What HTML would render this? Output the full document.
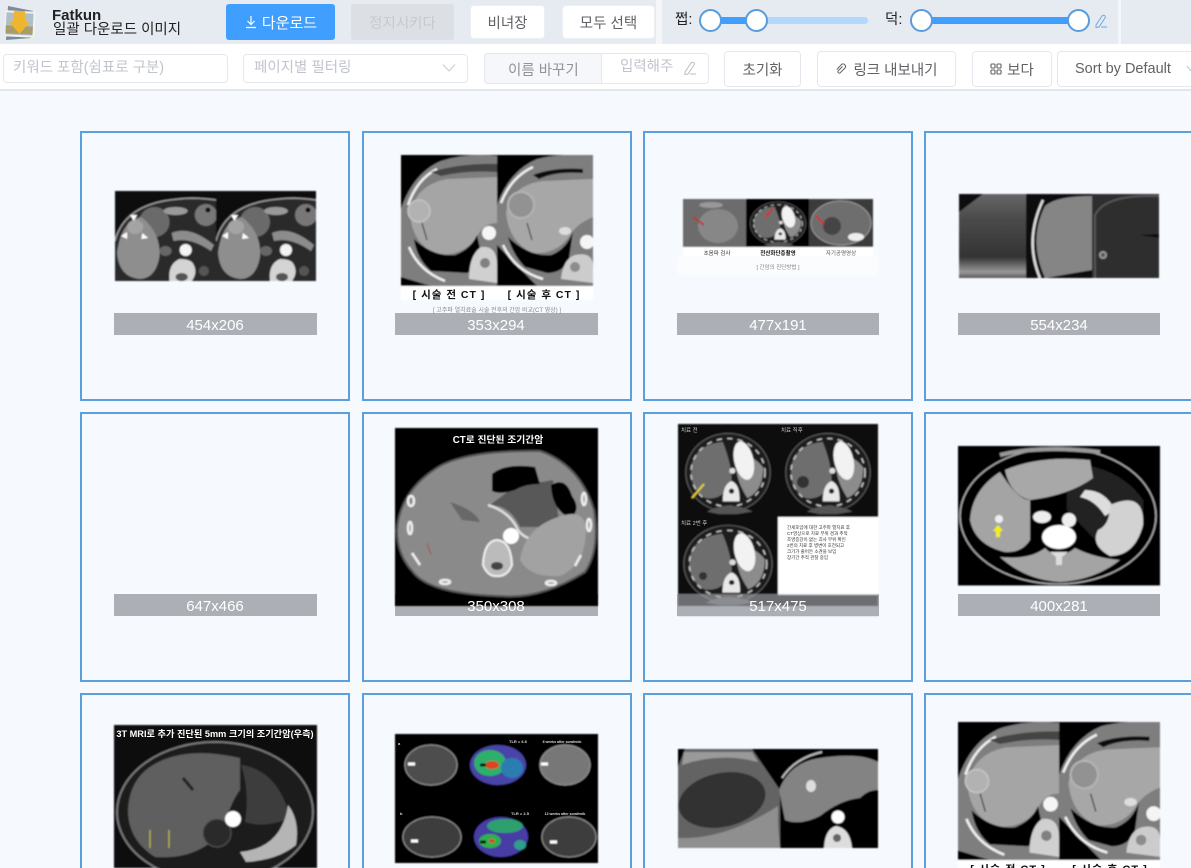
<!DOCTYPE html>
<html lang="ko"><head><meta charset="utf-8"><title>Fatkun</title>
<style>
*{box-sizing:border-box}
html,body{margin:0;padding:0;width:1191px;height:868px;overflow:hidden;background:#f6faff;font-family:"Liberation Sans","Noto Sans CJK KR",sans-serif;color:#606266}
#w{position:relative;width:1191px;height:868px;overflow:hidden;background:#f6faff}
.a{position:absolute}
.t{position:absolute;white-space:nowrap;line-height:1}
.b{position:absolute;background:#fff;border:1px solid #e4e7ed;border-radius:4px;display:flex;align-items:center;justify-content:center;font-size:14.500px;color:#606266;white-space:nowrap}
.card{position:absolute;width:270px;height:270px;border:2px solid #5b9fdc}
.r{width:267px;border-right:0}
.c{height:175px;border-bottom:0}
.l{position:absolute;height:22px;background:#acafb5}
svg{position:absolute;left:0;top:0}
</style></head><body><div id="w">
<div class="a" style="left:0;top:0;width:1191px;height:44px;background:#e6eaf1"></div>
<div class="a" style="left:656px;top:0;width:6px;height:44px;background:#f4f6f9"></div>
<div class="a" style="left:1118px;top:0;width:3px;height:44px;background:#f4f6f9"></div>
<div class="a" style="left:0;top:44px;width:1191px;height:45px;background:#fff"></div>
<div class="a" style="left:0;top:89px;width:1191px;height:2px;background:#e2e5e9"></div>

<svg width="40" height="44" viewBox="0 0 40 44" style="left:0;top:0">
<path d="M8 6 L33 11 L31 38 L6 40Z" fill="#7f8a9b"/><rect x="5" y="11" width="30" height="26" fill="#f2f2ee" transform="rotate(3 20 24)"/>
<rect x="6" y="13" width="27" height="22" fill="#aebfca" transform="rotate(3 20 24)"/><rect x="6" y="26" width="27" height="8" fill="#a89c6a" transform="rotate(3 20 24)"/>
<path d="M14 11h11v11h5L19.500 34 9 22h5z" fill="#efb52c"/></svg>
<div class="t" style="left:52px;top:8px;font-size:15px;font-weight:bold;color:#222">Fatkun</div>
<div class="t" style="left:53px;top:23px;font-size:14.500px;color:#222">일괄 다운로드 이미지</div>

<div class="a" style="left:226px;top:4px;width:109px;height:36px;background:#409eff;border-radius:3px;color:#fff;font-size:15px;display:flex;align-items:center;justify-content:center">
<svg width="14" height="14" viewBox="0 0 14 14" style="position:static;margin-right:4px"><path d="M7 1v8M3.500 6L7 9.500 10.500 6M2 12.500h10" fill="none" stroke="#fff" stroke-width="1.200"/></svg>다운로드</div>
<div class="a" style="left:351px;top:4px;width:103px;height:36px;background:#dcdfe3;border-radius:3px;color:#c6c9ce;font-size:14.500px;display:flex;align-items:center;justify-content:center">정지시키다</div>
<div class="b" style="left:470px;top:5px;width:75px;height:34px;border-color:#eceff3">비녀장</div>
<div class="b" style="left:562px;top:5px;width:93px;height:34px;border-color:#eceff3">모두 선택</div>

<div class="t" style="left:675px;top:13px;font-size:14.500px;color:#222">쩝:</div>
<div class="a" style="left:709px;top:17px;width:159px;height:7px;background:#b3d8ff;border-radius:4px"></div>
<div class="a" style="left:710px;top:17px;width:46px;height:7px;background:#409eff"></div>
<div class="a" style="left:699px;top:9px;width:23px;height:23px;border-radius:50%;background:#fff;border:2px solid #5a9bdc"></div>
<div class="a" style="left:745px;top:9px;width:23px;height:23px;border-radius:50%;background:#fff;border:2px solid #5a9bdc"></div>
<div class="t" style="left:885px;top:13px;font-size:14.500px;color:#222">덕:</div>
<div class="a" style="left:921px;top:17px;width:157px;height:7px;background:#409eff"></div>
<div class="a" style="left:910px;top:9px;width:23px;height:23px;border-radius:50%;background:#fff;border:2px solid #5a9bdc"></div>
<div class="a" style="left:1067px;top:9px;width:23px;height:23px;border-radius:50%;background:#fff;border:2px solid #5a9bdc"></div>
<svg width="14" height="16" viewBox="0 0 14 16" style="left:1094px;top:13px"><path d="M2 12L8 3a1.800 1.800 0 0 1 3 2L5 14l-3 .500zM7 14h6" fill="none" stroke="#6aa8e6" stroke-width="1"/></svg>

<div class="a" style="left:3px;top:54px;width:225px;height:29px;border:1px solid #e4e7ed;border-radius:4px;background:#fff"></div>
<div class="t" style="left:13px;top:61px;font-size:14.500px;color:#c0c4cc">키워드 포함(쉼표로 구분)</div>
<div class="a" style="left:243px;top:54px;width:225px;height:29px;border:1px solid #e4e7ed;border-radius:4px;background:#fff"></div>
<div class="t" style="left:254px;top:61px;font-size:14.500px;color:#c0c4cc">페이지별 필터링</div>
<svg width="14" height="10" viewBox="0 0 14 10" style="left:442px;top:63px"><path d="M1 1.500L7 8l6-6.500" fill="none" stroke="#c8ccd3" stroke-width="1"/></svg>
<div class="a" style="left:484px;top:53px;width:225px;height:31px;border:1px solid #e4e7ed;border-radius:4px;background:#fff"></div>
<div class="a" style="left:484px;top:53px;width:118px;height:31px;border:1px solid #e4e7ed;border-radius:4px 0 0 4px;background:#f5f7fa"></div>
<div class="t" style="left:508px;top:64px;font-size:14.500px;color:#909399">이름 바꾸기</div>
<div class="t" style="left:620px;top:60px;font-size:14.500px;color:#c0c4cc">입력해주</div>
<svg width="14" height="16" viewBox="0 0 14 16" style="left:683px;top:60px"><path d="M2 12L8 3a1.800 1.800 0 0 1 3 2L5 14l-3 .500zM7 14h6" fill="none" stroke="#b8bcc4" stroke-width="1"/></svg>
<div class="b" style="left:724px;top:51px;width:77px;height:36px">초기화</div>
<div class="b" style="left:817px;top:51px;width:139px;height:36px"><svg width="12" height="12" viewBox="0 0 12 12" style="position:static;margin-right:6px"><path d="M7.500 2.500L3 7a1.500 1.500 0 0 0 2 2l5-5a2.500 2.500 0 0 0-3.500-3.500L1.800 5.500" fill="none" stroke="#606266" stroke-width="1" transform="translate(0 1)"/></svg>링크 내보내기</div>
<div class="b" style="left:972px;top:51px;width:80px;height:36px"><svg width="12" height="12" viewBox="0 0 12 12" style="position:static;margin-right:5px"><g fill="none" stroke="#606266" stroke-width="1.100"><rect x="1" y="1" width="4" height="4" rx=".8"/><rect x="7" y="1" width="4" height="4" rx=".8"/><rect x="1" y="7" width="4" height="4" rx=".8"/><rect x="7" y="7" width="4" height="4" rx=".8"/></g></svg>보다</div>
<div class="b" style="left:1057px;top:51px;width:134px;height:36px;justify-content:flex-start;padding-left:17px;border-right:0;border-radius:4px 0 0 4px">Sort by Default</div>
<svg width="5" height="8" viewBox="0 0 5 8" style="left:1186px;top:65px"><path d="M1 1l4 5" fill="none" stroke="#b8bcc4"/></svg>

<div class="card" style="left:80px;top:131px"></div><div class="card" style="left:362px;top:131px"></div><div class="card" style="left:643px;top:131px"></div><div class="card r" style="left:924px;top:131px"></div>
<div class="card" style="left:80px;top:412px"></div><div class="card" style="left:362px;top:412px"></div><div class="card" style="left:643px;top:412px"></div><div class="card r" style="left:924px;top:412px"></div>
<div class="card c" style="left:80px;top:693px"></div><div class="card c" style="left:362px;top:693px"></div><div class="card c" style="left:643px;top:693px"></div><div class="card c r" style="left:924px;top:693px"></div>
<div class="l" style="left:114px;top:313px;width:203px"></div><div class="l" style="left:395px;top:313px;width:203px"></div><div class="l" style="left:677px;top:313px;width:202px"></div><div class="l" style="left:958px;top:313px;width:202px"></div>
<div class="l" style="left:114px;top:594px;width:203px"></div><div class="l" style="left:395px;top:594px;width:203px"></div><div class="l" style="left:677px;top:594px;width:202px"></div><div class="l" style="left:958px;top:594px;width:202px"></div>

<svg width="1191" height="868" viewBox="0 0 1191 868" font-family="'Liberation Sans','Noto Sans CJK KR',sans-serif">
<defs>
<filter id="s" x="-2%" y="-2%" width="104%" height="104%"><feGaussianBlur stdDeviation=".7"/></filter>
<linearGradient id="us" x1="0" y1="0" x2="0" y2="1"><stop offset="0" stop-color="#666"/><stop offset=".3" stop-color="#4a4a4a"/><stop offset=".75" stop-color="#333"/><stop offset=".93" stop-color="#999"/><stop offset="1" stop-color="#555"/></linearGradient>

<symbol id="p1" viewBox="0 0 100 90" preserveAspectRatio="none">
<rect width="100" height="90" fill="#0a0a0a"/>
<path d="M0 90V48Q8 18 48 10Q75 5 100 9V90Z" fill="#2a2a2a"/>
<path d="M0 50Q8 18 48 10Q75 5 100 9" fill="none" stroke="#999" stroke-width="1.500"/>
<ellipse cx="39" cy="31" rx="15" ry="15" fill="#6a6a6a" transform="rotate(25 39 31)"/>
<path d="M2 62Q6 30 26 26Q46 42 44 66Q40 88 24 88Q4 86 2 62Z" fill="#8e8e8e"/>
<ellipse cx="60" cy="20" rx="12" ry="4" fill="#999"/>
<circle cx="90" cy="24" r="11" fill="#777"/><circle cx="92" cy="19" r="2.500" fill="#111"/>
<path d="M56 42Q74 34 98 54L95 60Q75 46 58 50Z" fill="#8c8c8c"/>
<ellipse cx="50" cy="60" rx="6" ry="5" fill="#666"/>
<circle cx="70" cy="59" r="6" fill="#f4f4f4"/>
<path d="M54 90Q52 73 64 68Q76 68 78 74Q82 82 76 90Z" fill="#d4d4d4"/>
<ellipse cx="66" cy="86" rx="6" ry="4" fill="#555"/><circle cx="88" cy="80" r="5" fill="#555"/>
<ellipse cx="20" cy="36" rx="8" ry="7" fill="#a4a4a4"/>
<path d="M15 24l7 0-3.500 6zM6 45l6-4 0 7zM27 42l6 5-7 1z" fill="#fff"/>
</symbol>

<symbol id="p2" viewBox="0 0 96 131" preserveAspectRatio="none">
<rect width="96" height="131" fill="#000"/>
<path d="M0 122V54Q12 18 40 6Q65-2 96 1V131H30Z" fill="#7e7e7e"/>
<path d="M7 50Q16 24 36 14M8 92Q18 116 44 126" fill="none" stroke="#eee" stroke-width="2.500"/>
<path d="M30 17q30-9 66-8v8q-30-2-56 4z" fill="#444"/>
<path d="M9 60Q14 30 46 24L96 22V68Q82 68 76 82Q62 102 36 99Q12 90 9 60Z" fill="#a5a5a5"/>
<path d="M13 84Q32 102 54 100Q70 94 76 80L80 98Q76 114 66 118L30 116Q16 104 13 84Z" fill="#000"/>
<circle cx="18" cy="56" r="11" fill="#b2b2b2" stroke="#c4c4c4" stroke-width="1.500"/>
<circle cx="88" cy="78" r="7" fill="#f5f5f5"/>
<path d="M68 124Q68 100 80 92Q96 90 96 110V128Z" fill="#d0d0d0"/><circle cx="84" cy="108" r="5" fill="#808080"/>
<path d="M21 68L26 85" stroke="#111" stroke-width="1"/>
</symbol>

<symbol id="p2b" viewBox="0 0 96 131" preserveAspectRatio="none">
<rect width="96" height="131" fill="#000"/>
<path d="M0 90V50Q12 16 40 4Q65-2 96 0V131H40Z" fill="#7e7e7e"/>
<path d="M4 48Q14 22 36 12M6 90Q18 116 46 124" fill="none" stroke="#eee" stroke-width="2.500"/>
<path d="M36 20q20-8 50-6v4q-28-2-44 6z" fill="#111"/>
<path d="M9 58Q14 30 46 26L96 24V62Q82 68 76 76Q62 100 36 98Q12 88 9 58Z" fill="#a7a7a7"/>
<path d="M11 82Q32 102 54 100Q70 94 76 76L72 104Q66 118 50 118L28 112Q16 100 11 82Z" fill="#000"/>
<circle cx="24" cy="50" r="13" fill="#929292" stroke="#b4b4b4" stroke-width="2"/>
<ellipse cx="68" cy="76" rx="6" ry="4" fill="#ddd"/>
<circle cx="90" cy="87" r="7" fill="#f5f5f5"/>
<path d="M64 124Q66 104 78 100Q96 96 96 112V128Z" fill="#ccc"/><circle cx="78" cy="112" r="5" fill="#8c8c8c"/>
<path d="M30 68L35 85" stroke="#111" stroke-width="1"/>
</symbol>

<symbol id="body" viewBox="0 0 100 100" preserveAspectRatio="none">
<ellipse cx="50" cy="50" rx="48" ry="46" fill="#1a1a1a" stroke="#666" stroke-width="1"/>
<path d="M8 50Q8 18 44 14Q54 40 54 58Q46 84 24 80Q8 70 8 50Z" fill="#6e6e6e"/>
<path d="M58 30Q76 26 90 44Q90 72 72 80Q62 64 60 50Z" fill="#8c8c8c"/>
<ellipse cx="68" cy="36" rx="11" ry="23" fill="#f2f2f2" transform="rotate(-12 68 36)"/>
<ellipse cx="50" cy="50" rx="42" ry="40" fill="none" stroke="#ccc" stroke-width="1.600" stroke-dasharray="6 6"/>
<circle cx="55" cy="48" r="3.500" fill="#ddd"/>
<path d="M44 84Q44 64 54 60Q64 64 63 84Z" fill="#e8e8e8"/><circle cx="54" cy="72" r="3" fill="#222"/>
<path d="M26 96Q50 82 78 96L60 99H40Z" fill="#555"/>
</symbol>
</defs>

<g filter="url(#s)">
<!-- 1 -->
<use href="#p1" x="115" y="191" width="101" height="90"/><use href="#p1" x="216" y="191" width="100" height="90"/>
<!-- 2 -->
<rect x="401" y="155" width="192" height="145" fill="#fff"/>
<use href="#p2" x="401" y="155" width="96" height="131"/><use href="#p2b" x="497" y="155" width="96" height="131"/>
<!-- 3 -->
<rect x="678" y="257" width="200" height="18" fill="#fbfcfd"/>
<rect x="683" y="247" width="190" height="10" fill="#fff"/>
<rect x="683" y="199" width="190" height="48" fill="#000"/>
<rect x="683" y="199" width="63" height="48" fill="#6c6c6c"/>
<ellipse cx="718" cy="226" rx="20" ry="17" fill="#878787"/><ellipse cx="711" cy="205" rx="12" ry="3" fill="#999"/>
<path d="M693 217l11 8" stroke="#b33" stroke-width="2"/>
<use href="#body" x="749" y="200" width="58" height="47"/>
<path d="M773 208l-8 10" stroke="#c33" stroke-width="2"/>
<rect x="809" y="199" width="64" height="48" fill="#3a3a3a"/>
<ellipse cx="841" cy="223" rx="30" ry="22" fill="#6e6e6e" stroke="#999"/>
<ellipse cx="856" cy="237" rx="8" ry="4" fill="#eee"/><circle cx="832" cy="226" r="9" fill="#454545"/>
<path d="M816 216l8 8" stroke="#c33" stroke-width="2"/>
<!-- 4 -->
<rect x="959" y="194" width="67" height="84" fill="url(#us)"/>
<path d="M959 194h24L959 212z" fill="#0a0a0a"/><rect x="1026" y="194" width="66" height="84" fill="#111"/>
<path d="M1045 278Q1028 240 1045 206Q1056 196 1092 196V270Z" fill="#858585"/>
<path d="M1040 278Q1024 240 1043 200" fill="none" stroke="#ddd" stroke-width="2.500"/>
<rect x="1092" y="194" width="67" height="84" fill="#2e2e2e"/>
<path d="M1095 278V215Q1105 194 1159 196" fill="none" stroke="#555" stroke-width="2"/>
<circle cx="1103" cy="255" r="4" fill="#999"/><circle cx="1103" cy="255" r="2" fill="#555"/>
<path d="M1140 235l19 3v-4z" fill="#0b0b0b"/>
<!-- 6 -->
<rect x="395" y="428" width="203" height="178" fill="#000"/>
<path d="M397 530Q400 490 440 466Q470 450 540 451Q580 465 594 510Q600 550 585 572Q540 600 500 596Q430 594 413 572Q397 555 397 530Z" fill="#8a8a8a" stroke="#555" stroke-width="2"/>
<path d="M514 487L553 480L560 527L520 527Q510 505 490 505Z" fill="#585858"/>
<path d="M492 474Q505 463 535 467L540 484Q525 484 515 490Q500 495 492 491Z" fill="#000"/>
<path d="M551 485Q566 476 572 496Q582 510 570 518Q552 510 551 485Z" fill="#000"/>
<path d="M450 502Q475 510 480 522L462 520Z" fill="#686868"/>
<path d="M488 505Q510 512 518 530Q525 540 540 540" fill="none" stroke="#ddd" stroke-width="2.500"/>
<path d="M520 560Q525 525 565 515Q585 510 586 530Q586 565 560 576Q530 578 520 560Z" fill="#a2a2a2"/>
<circle cx="511" cy="536" r="8" fill="#fff"/>
<path d="M483 565Q484 541 497 540Q511 541 512 565Q507 577 497 576Q488 577 483 565Z" fill="#bbb" stroke="#eee" stroke-width="2"/>
<ellipse cx="497" cy="566" rx="6" ry="4" fill="#444"/>
<g fill="none" stroke="#eee" stroke-width="2.500"><ellipse cx="410" cy="528" rx="2" ry="6"/><ellipse cx="411" cy="501" rx="3" ry="5"/><path d="M412 553l8 12"/><ellipse cx="445" cy="582" rx="5" ry="2"/><ellipse cx="551" cy="583" rx="5" ry="2"/><path d="M581 555l-6 11"/><ellipse cx="589" cy="525" rx="2" ry="6"/><ellipse cx="584" cy="499" rx="2" ry="6"/></g>
<path d="M427 543l4 12" stroke="#a33" stroke-width=".8"/>
<!-- 7 -->
<rect x="678" y="424" width="200" height="184" fill="#070707"/>
<rect x="778" y="517" width="100" height="78" fill="#fff"/>
<use href="#body" x="684" y="430" width="88" height="85"/><use href="#body" x="784" y="430" width="88" height="85"/><use href="#body" x="682" y="522" width="92" height="84"/>
<path d="M692 498l12-14" stroke="#e8d030" stroke-width="2"/>
<circle cx="803" cy="482" r="6" fill="#333"/><circle cx="703" cy="576" r="4" fill="#333"/>
<rect x="678" y="594" width="200" height="14" fill="#acafb5" opacity=".62"/>
<rect x="678" y="606" width="200" height="10" fill="#acafb5"/>
<!-- 8 -->
<rect x="958" y="446" width="202" height="141" fill="#000"/>
<ellipse cx="1058" cy="516" rx="98" ry="68" fill="#000" stroke="#aaa" stroke-width="1.500"/>
<path d="M1067 463Q1120 466 1143 500V530L1100 545L1067 510Z" fill="#222"/>
<path d="M970 520Q972 490 1000 472L1007 482Q1020 500 1030 500L1030 540Q1022 553 1005 552Q975 545 970 520Z" fill="#a4a4a4"/>
<path d="M1005 470Q1040 455 1090 460L1093 478Q1070 495 1030 500Q1010 495 1005 470Z" fill="#a8a8a8"/>
<path d="M1000 455Q1040 445 1100 452" fill="none" stroke="#999" stroke-width="4"/>
<path d="M1085 490Q1105 490 1115 510L1105 516Q1095 500 1080 497Z" fill="#ddd"/>
<path d="M1110 505Q1145 490 1143 525Q1135 556 1110 556Q1090 545 1098 530Q1110 525 1110 505Z" fill="#d2d2d2"/>
<ellipse cx="1042" cy="517" rx="9" ry="6" fill="#eee"/><circle cx="1069" cy="520" r="7" fill="#eee"/>
<ellipse cx="1059" cy="537" rx="17" ry="12" fill="#fff"/>
<path d="M1000 557Q1030 560 1045 548Q1058 562 1075 548Q1095 558 1120 560Q1095 580 1060 582Q1025 580 1000 557Z" fill="#a4a4a4"/>
<path d="M1050 552h18l-6 5v8h-6v-8z" fill="#ddd"/>
<circle cx="999" cy="519" r="4" fill="#eee"/>
<path d="M998 525l-5 6h3v6h4v-6h3z" fill="#f6f000"/>
<rect x="958" y="586" width="202" height="2" fill="#fff"/>
<!-- 9 -->
<rect x="114" y="725" width="203" height="143" fill="#070707"/>
<ellipse cx="215" cy="812" rx="98" ry="70" fill="#1d1d1d" stroke="#777" stroke-width="2"/>
<path d="M128 810Q130 765 180 755Q205 750 240 758L240 790Q232 800 222 830Q200 860 155 857Q128 840 128 810Z" fill="#5e5e5e"/>
<path d="M241 765Q275 770 288 810L285 820Q262 828 245 822Q250 790 241 765Z" fill="#3c3c3c"/>
<path d="M240 852Q282 848 288 805Q300 820 296 845Q278 860 246 862Z" fill="#b5b5b5"/>
<path d="M183 778l10 12" stroke="#222" stroke-width="3"/>
<circle cx="217" cy="833" r="14" fill="#2c2c2c" stroke="#555"/>
<circle cx="233" cy="819" r="8" fill="#fff"/>
<path d="M150 830v18M169 830v18" stroke="#c9c050" stroke-width="1"/>
<!-- 10 -->
<rect x="395" y="734" width="203" height="129" fill="#000"/>
<g stroke="#999"><ellipse cx="431" cy="765" rx="26" ry="20" fill="#4e4e4e"/><ellipse cx="565" cy="765" rx="25" ry="20" fill="#777"/><ellipse cx="432" cy="837" rx="29" ry="20" fill="#3c3c3c"/><ellipse cx="569" cy="837" rx="27" ry="20" fill="#3c3c3c"/></g>
<ellipse cx="498" cy="765" rx="28" ry="20" fill="#4a45a8"/><ellipse cx="490" cy="763" rx="16" ry="13" fill="#2fb06a"/><ellipse cx="512" cy="768" rx="11" ry="10" fill="#2c7db0"/><ellipse cx="492" cy="765" rx="7" ry="4" fill="#dd4422"/>
<ellipse cx="501" cy="837" rx="27" ry="20" fill="#463ea4"/><ellipse cx="505" cy="826" rx="18" ry="7" fill="#2fa070"/><ellipse cx="490" cy="841" rx="11" ry="7" fill="#2fb050"/><ellipse cx="492" cy="841" rx="3" ry="2" fill="#dd4422"/><ellipse cx="520" cy="845" rx="6" ry="5" fill="#2f9f8a"/>
<path d="M408 764h7M411 841h7M541 764h7M550 842h7" stroke="#fff" stroke-width="3"/>
<path d="M480 765h6M480 842h6" stroke="#000" stroke-width="3"/>
<!-- 11 -->
<rect x="678" y="749" width="200" height="99" fill="#000"/>
<path d="M678 848V767L685 749H752L780 790V848Z" fill="#636363"/>
<path d="M684 752H752L758 762Q720 752 682 765Z" fill="#9a9a9a"/>
<ellipse cx="722" cy="800" rx="44" ry="27" fill="#303030" transform="rotate(-12 722 800)"/>
<path d="M678 848V838Q725 840 778 806V825L780 848Z" fill="#8f8f8f"/>
<path d="M779 790Q790 762 820 758Q860 752 878 762V790Q868 790 860 798Q840 800 820 816Q800 826 785 820Z" fill="#838383"/>
<path d="M782 778Q795 758 822 752" fill="none" stroke="#bbb" stroke-width="2"/>
<ellipse cx="811" cy="786" rx="5" ry="6" fill="#ddd"/><circle cx="838" cy="817" r="6.500" fill="#fff"/>
<path d="M824 848Q825 829 836 826Q850 828 852 848Z" fill="#ddd"/><circle cx="837" cy="838" r="4" fill="#666"/>
<!-- 12 -->
<rect x="958" y="722" width="202" height="146" fill="#fff"/>
<use href="#p2" x="958" y="722" width="101" height="138"/><use href="#p2b" x="1059" y="722" width="101" height="138"/>
</g>

<g font-weight="bold">
<text x="449" y="298" text-anchor="middle" font-size="10.500" fill="#111" letter-spacing="1">[ 시술 전 CT ]</text>
<text x="544" y="298" text-anchor="middle" font-size="10.500" fill="#111" letter-spacing="1">[ 시술 후 CT ]</text>
<text x="1008" y="873" text-anchor="middle" font-size="11" fill="#111" letter-spacing="1">[ 시술 전 CT ]</text>
<text x="1110" y="873" text-anchor="middle" font-size="11" fill="#111" letter-spacing="1">[ 시술 후 CT ]</text>
<text x="498" y="443" text-anchor="middle" font-size="9.800" fill="#fff">CT로 진단된 조기간암</text>
<text x="215" y="737" text-anchor="middle" font-size="9.200" fill="#fff">3T MRI로 추가 진단된 5mm 크기의 조기간암(우측)</text>
</g>
<text x="497" y="312" text-anchor="middle" font-size="6" fill="#888">[ 고주파 열치료술 시술 전후의 간암 비교(CT 영상) ]</text>
<text x="717" y="255" text-anchor="middle" font-size="5.500" fill="#333">초음파 검사</text>
<text x="778" y="255" text-anchor="middle" font-size="5.500" fill="#111" font-weight="bold">전산화단층촬영</text>
<text x="841" y="255" text-anchor="middle" font-size="5.500" fill="#555">자기공명영상</text>
<text x="778" y="269" text-anchor="middle" font-size="5.500" fill="#888">[ 간암의 진단방법 ]</text>
<g font-size="5.500" fill="#ccc"><text x="681" y="432">치료 전</text><text x="781" y="432">치료 직후</text><text x="681" y="525">치료 2번 후</text></g>
<g font-size="4.500" fill="#333"><text x="787" y="529">간세포암에 대한 고주파 열치료 후</text><text x="787" y="535">CT영상으로 치료 부위 경과 추적</text><text x="787" y="541">조영증강이 없는 괴사 부위 확인</text><text x="787" y="547">2번의 치료 후 병변이 호전되고</text><text x="787" y="553">크기가 줄어든 소견을 보임</text><text x="787" y="559">장기간 추적 관찰 중임</text></g>
<g font-size="4" fill="#ddd" font-weight="bold"><text x="518" y="743" text-anchor="middle">TLR = 6.6</text><text x="562" y="743" text-anchor="middle" font-size="3.500">6 weeks after sorafenib</text><text x="520" y="815" text-anchor="middle">TLR = 2.5</text><text x="565" y="815" text-anchor="middle" font-size="3.500">12 weeks after sorafenib</text><text x="398" y="745">a</text><text x="400" y="815">b</text></g>

<g font-size="15" fill="#fff" text-anchor="middle">
<text x="215" y="330">454x206</text><text x="496" y="330">353x294</text><text x="778" y="330">477x191</text><text x="1059" y="330">554x234</text>
<text x="215" y="611">647x466</text><text x="496" y="611">350x308</text><text x="778" y="611">517x475</text><text x="1059" y="611">400x281</text>
</g>
</svg>
</div></body></html>
